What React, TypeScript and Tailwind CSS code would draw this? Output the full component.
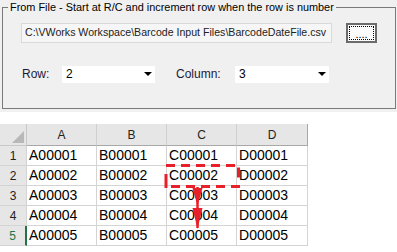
import React from 'react';

const rows = [1, 2, 3, 4, 5];
const cols = ['A', 'B', 'C', 'D'];

const Combo: React.FC<{ value: string; width: string }> = ({ value, width }) => (
  <div className={`${width} h-[17px] bg-white flex items-center justify-between pl-[4px] pr-[3px]`}>
    <span className="text-[12px] text-black leading-none">{value}</span>
    <svg width="8" height="5" viewBox="0 0 8 5">
      <path d="M0 0 L8 0 L4 4 Z" fill="#000" />
    </svg>
  </div>
);

const App: React.FC = () => {
  return (
    <div className="w-[397px] h-[252px] bg-white overflow-hidden font-['Liberation_Sans',Arial,sans-serif]">
      <div className="bg-[#f0f0f0] h-[112px] pt-[7px] pl-[2px] pr-[1px]">
        <div className="relative border border-[#7a7a7a] h-[102px] pt-[15px] pl-[18px]">
          <span className="absolute -top-[8px] left-[5px] bg-[#f0f0f0] px-[2px] text-[10.9px] leading-[14px] text-black whitespace-nowrap">
            From File - Start at R/C and increment row when the row is number
          </span>
          <div className="flex items-center">
            <div className="w-[311px] h-[20px] bg-[#f6f6f6] border border-[#d9d9d9] flex items-center pl-[3px] text-[10.6px] text-[#222] whitespace-nowrap overflow-hidden">
              C:\VWorks Workspace\Barcode Input Files\BarcodeDateFile.csv
            </div>
            <div className="ml-[14px] w-[31px] h-[20px] border-2 border-[#6b6b6b] bg-[#fbfbfb] p-[1px]">
              <div className="w-full h-full border border-dotted border-black flex items-end justify-center text-[11px] leading-[10px] text-black">
                ....
              </div>
            </div>
          </div>
          <div className="flex items-center mt-[22px]">
            <span className="w-[41px] pl-[1px] text-[12px] text-[#1a1a3a]">Row:</span>
            <Combo value="2" width="w-[93px]" />
            <span className="ml-[21px] w-[59px] text-[12px] text-[#1a1a3a]">Column:</span>
            <Combo value="3" width="w-[94px]" />
          </div>
        </div>
      </div>

      <div className="relative mt-[12px] w-[308px]">
        <div className="grid grid-cols-[27px_70px_70px_70px_71px]">
          <div className="h-[22px] bg-[#e6e6e6] border-r border-b border-[#c8c8c8] flex items-end justify-end p-[2px]">
            <svg width="12" height="12" viewBox="0 0 12 12">
              <path d="M12 0 L12 12 L0 12 Z" fill="#b8b8b8" />
            </svg>
          </div>
          {cols.map((c, i) => (
            <div
              key={c}
              className={`h-[22px] bg-[#e6e6e6] border-b border-b-[#a8a8a8] border-r ${i === 3 ? 'border-r-[#a8a8a8]' : 'border-r-[#cfcfcf]'} flex items-center justify-center text-[12px] text-[#222]`}
            >
              {c}
            </div>
          ))}
          {rows.map((r) => (
            <React.Fragment key={r}>
              <div
                className={`h-[20px] bg-[#e6e6e6] border-b border-[#d4d4d4] flex items-center justify-center text-[12px] ${r === 5 ? 'border-r-2 border-r-[#217346] text-[#217346]' : 'border-r text-[#222]'}`}
              >
                {r}
              </div>
              {cols.map((c, i) => (
                <div
                  key={c}
                  className={`h-[20px] bg-white border-b border-[#d4d4d4] border-r ${i === 3 ? 'border-r-[#d4d4d4]' : ''} flex items-center pl-[2px] text-[14px] text-black`}
                >
                  {c}0000{r}
                </div>
              ))}
            </React.Fragment>
          ))}
        </div>

        <svg className="absolute left-0 top-0 pointer-events-none" width="308" height="128" viewBox="0 0 308 128">
          <g stroke="#e8202a" strokeWidth="3" fill="none">
            <path d="M166 41.5 H240" strokeDasharray="9 6" />
            <path d="M238.5 41.5 V63.5" strokeDasharray="0 2 10 20" />
            <path d="M240 62.5 H166" strokeDasharray="9 6" />
            <path d="M166 50 V64" />
            <path d="M197.5 63 V104" strokeWidth="2.5" />
          </g>
          <path d="M192.5 64 L202.5 64 L197.5 82 Z" fill="#e8202a" />
          <path d="M192.5 84 L202.5 84 L197.5 105 Z" fill="#e8202a" />
        </svg>
      </div>
    </div>
  );
};

export default App;
